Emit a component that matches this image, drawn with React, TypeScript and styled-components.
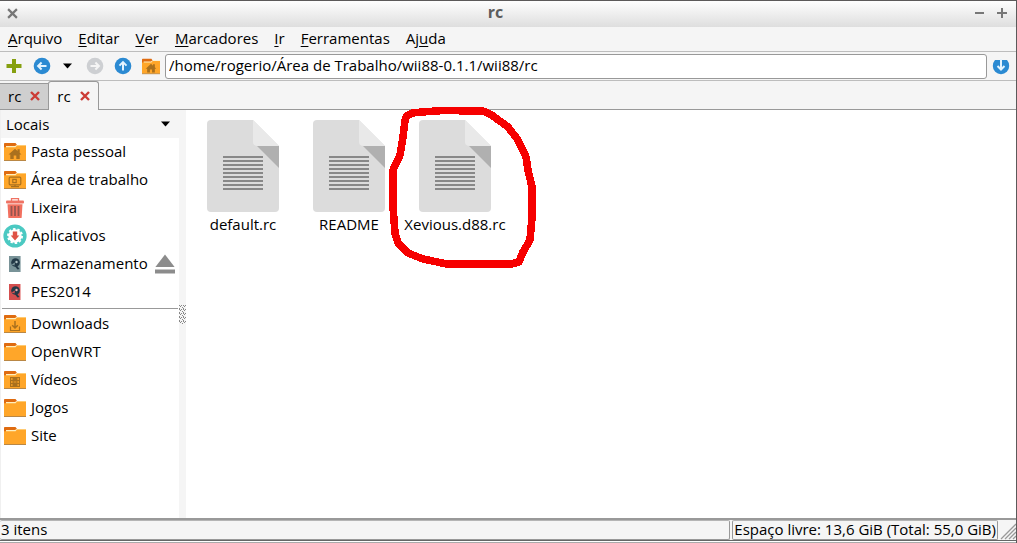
import React from "react";
import styled, { createGlobalStyle } from "styled-components";

const GlobalStyle = createGlobalStyle`
  * { box-sizing: border-box; }
  body { margin: 0; background: #fff; }
  body, button, input, select {
    font-family: "Open Sans", "Noto Sans", sans-serif;
    font-size: 15px;
    line-height: 20px;
    color: #000;
  }
  button { border: 0; padding: 0; background: none; }
  svg { display: block; flex: none; }
`;

const Window = styled.div`
  display: flex;
  flex-direction: column;
  min-height: 100vh;
  background: #f5f5f5;
  border-top: 1px solid #5c5a5a;
  border-right: 1px solid #5c5a5a;
`;

const TitleBar = styled.header`
  display: flex;
  align-items: center;
  height: 26px;
  padding: 0 8px 2px 7px;
  background: linear-gradient(#fefefe, #dedede);
`;

const Title = styled.h1`
  flex: 1;
  margin: 0;
  padding-bottom: 2px;
  text-align: center;
  font-size: 16px;
  line-height: 20px;
  color: #5c5c5c;
`;

const WindowControls = styled.div`
  display: flex;
  gap: 11px;
`;

const MenuBar = styled.nav`
  display: flex;
  align-items: flex-start;
  gap: 16px;
  height: 25px;
  padding: 1px 8px;
  border-bottom: 1px solid #bdbdbd;
`;

const MenuButton = styled.button`
  u { text-underline-offset: 2px; }
`;

const ToolBar = styled.div`
  display: flex;
  align-items: center;
  height: 29px;
  padding: 0 6px 0 5px;
  border-bottom: 1px solid #bdbdbd;
`;

const ToolButton = styled.button<{ $gap: number }>`
  margin-right: ${(p) => p.$gap}px;
`;

const PathInput = styled.input`
  flex: 1;
  min-width: 0;
  height: 25px;
  margin-right: 5px;
  padding: 0 3px 2px;
  border: 1px solid #999;
  border-radius: 3px;
  background: #fff;
  outline: none;
`;

const TabStrip = styled.div`
  display: flex;
  align-items: flex-end;
  height: 29px;
  border-bottom: 1px solid #999;
`;

const Tab = styled.div<{ $active?: boolean }>`
  display: flex;
  align-items: center;
  gap: 9px;
  height: ${(p) => (p.$active ? 29 : 26)}px;
  margin-bottom: ${(p) => (p.$active ? -1 : 0)}px;
  padding: 0 8px 1px;
  border: 1px solid #999;
  border-bottom: 0;
  border-left-width: ${(p) => (p.$active ? 1 : 0)}px;
  border-right-width: ${(p) => (p.$active ? 1 : 0)}px;
  border-radius: ${(p) => (p.$active ? "3px 3px 0 0" : "0")};
  background: ${(p) => (p.$active ? "#f5f5f5" : "#cfcfcf")};
`;

const Body = styled.main`
  display: flex;
  flex: 1;
  background: #fff;
`;

const SidePane = styled.aside`
  display: flex;
  flex-direction: column;
  width: 179px;
  border-left: 1px solid #f0f0f0;
`;

const PlacesHeader = styled.label`
  display: flex;
  align-items: center;
  height: 28px;
  padding: 0 9px 0 5px;
  background: #f5f5f5;
`;

const PlacesSelect = styled.select`
  flex: 1;
  min-width: 0;
  border: 0;
  padding: 0;
  appearance: none;
  background: none;
  outline: none;
`;

const PlaceList = styled.ul`
  margin: 0;
  padding: 0;
  list-style: none;
`;

const PlaceRow = styled.li`
  display: flex;
  align-items: center;
  justify-content: space-between;
  height: 28px;
  padding: 0 4px 0 2px;
`;

const PlaceLink = styled.a`
  display: flex;
  align-items: center;
  gap: 4px;
  color: #000;
  text-decoration: none;
  white-space: nowrap;
`;

const PlaceName = styled.span`
  padding-bottom: 2px;
`;

const IconSlot = styled.span`
  display: flex;
  justify-content: center;
  width: 24px;
`;

const Divider = styled.hr`
  margin: 2px 1px 1px;
  border: 0;
  border-top: 1px solid #999;
`;

const Splitter = styled.div`
  display: flex;
  align-items: center;
  width: 7px;
  background: #f5f5f5;
`;

const FileView = styled.section`
  display: flex;
  align-items: flex-start;
  flex: 1;
  padding: 10px 4px;
`;

const FileItem = styled.figure`
  position: relative;
  display: flex;
  flex-direction: column;
  align-items: center;
  gap: 2px;
  width: 106px;
  margin: 0;
`;

const FileName = styled.figcaption`
  white-space: nowrap;
`;

const Marking = styled.svg`
  position: absolute;
  left: -16px;
  top: -20px;
  pointer-events: none;
`;

const StatusBar = styled.footer`
  display: flex;
  gap: 2px;
  height: 23px;
  border-top: 2px solid #999;
  border-bottom: 1px solid #666;
`;

const StatusCell = styled.div<{ $grow?: boolean }>`
  flex: ${(p) => (p.$grow ? "1" : "none")};
  padding: 0 1px;
  line-height: 16px;
  border: 1px solid #999;
  border-left-width: ${(p) => (p.$grow ? 0 : 1)}px;
  border-top-color: #b5b5b5;
  border-radius: 2px;
`;

const FrameEdge = styled.div`
  height: 2px;
  background: #fff;
  border-bottom: 1px solid #aaa;
`;

const Cross = ({ color, size, weight = 2 }: { color: string; size: number; weight?: number }) => (
  <svg width={size} height={size} viewBox="0 0 10 10">
    <path d="M1 1L9 9M9 1L1 9" stroke={color} strokeWidth={weight} />
  </svg>
);

const Caret = () => (
  <svg width="9" height="6" viewBox="0 0 9 6">
    <path d="M0 0.5H9L4.5 5.5Z" fill="#000" />
  </svg>
);

const rotation = { up: 0, right: 90, left: 270 };

const ArrowDisc = ({ dir, muted }: { dir: keyof typeof rotation; muted?: boolean }) => (
  <svg width="18" height="18" viewBox="0 0 18 18">
    <circle cx="9" cy="9" r="8.3" fill={muted ? "#cdcfd2" : "#2b8ad2"} />
    <path
      d="M9 13.5V5M5.5 8.6L9 5.1L12.5 8.6"
      fill="none"
      stroke={muted ? "#f5f5f5" : "#e4f4ff"}
      strokeWidth="2"
      transform={`rotate(${rotation[dir]} 9 9)`}
    />
  </svg>
);

type Glyph = "home" | "desktop" | "download" | "video";

const FolderIcon = ({ glyph, width = 22 }: { glyph?: Glyph; width?: number }) => (
  <svg width={width} height={width === 22 ? 20 : 17} viewBox="0 0 22 20" preserveAspectRatio="none">
    <path d="M0 1.5Q0 1 .7 1H11.5L13 3V8H0Z" fill="#df6b10" />
    <path d="M2 4H11L12.5 3H22V8H2Z" fill="#ffefbd" />
    <path d="M0 5.2H11.5L13 3.6H22V18.5H0Z" fill="#ffa629" />
    <path d="M0 18.5H22" stroke="#b98745" strokeWidth="1" />
    {glyph === "home" && (
      <path d="M4.5 12.5L11 6.7L13.5 9V7.3H15.7V10.8L17.5 12.5H15.7V17H12.3V13.5H9.7V17H6.3V12.5Z" fill="#a9701e" />
    )}
    {glyph === "desktop" && (
      <g fill="none" stroke="#a9701e" strokeWidth="1.2">
        <rect x="5.2" y="7.2" width="11.6" height="7.6" rx="1" />
        <rect x="8.8" y="9.4" width="3.4" height="3.2" />
        <path d="M7 16.6H15M11 15V16.6" />
      </g>
    )}
    {glyph === "download" && (
      <g fill="none" stroke="#a9701e">
        <path d="M6.5 12.5V16.5H15.5V12.5" strokeWidth="1.2" />
        <path d="M11 7V13.5M8.2 11.2L11 14L13.8 11.2" strokeWidth="1.5" />
      </g>
    )}
    {glyph === "video" && (
      <g>
        <rect x="6" y="7" width="10" height="10" fill="#a9701e" />
        <path d="M7 8.2H8.6V9.8H7ZM7 11.2H8.6V12.8H7ZM7 14.2H8.6V15.8H7ZM13.4 8.2H15V9.8H13.4ZM13.4 11.2H15V12.8H13.4ZM13.4 14.2H15V15.8H13.4Z" fill="#ffa629" />
        <path d="M9.6 12H12.4" stroke="#ffa629" strokeWidth=".8" />
      </g>
    )}
  </svg>
);

const TrashIcon = () => (
  <svg width="20" height="22" viewBox="1 0 20 22">
    <path d="M7.5 4V1.7H14.5V4" fill="none" stroke="#ef7263" strokeWidth="1.3" />
    <rect x="2" y="3.6" width="18" height="3" rx="1" fill="#ef7263" />
    <path d="M3.5 7.3H18.5L17.6 21H4.4Z" fill="#f2705f" />
    <path d="M7.5 9V19M11 9V19M14.5 9V19" stroke="#96564f" strokeWidth="1.8" />
  </svg>
);

const AppsIcon = () => (
  <svg width="24" height="24" viewBox="0 0 24 24">
    <circle cx="12" cy="12" r="11.6" fill="#4bc9c2" />
    <circle cx="12" cy="12" r="7" fill="none" stroke="#fff" strokeWidth="2" strokeDasharray="2.4 2" />
    <circle cx="12" cy="12" r="6.7" fill="#fff" />
    <path d="M9.8 7.5H14.2V11.5H16.3L12 16.5L7.7 11.5H9.8Z" fill="#df5245" />
  </svg>
);

const DiskIcon = ({ color, edge }: { color: string; edge: string }) => (
  <svg width="22" height="18" viewBox="0 0 22 18">
    <path d="M5 1H16.5V17H5Z" fill={color} />
    <path d="M16.2 1H17V17H16.2Z" fill={edge} />
    <circle cx="11.5" cy="7.5" r="4.3" fill="#233947" />
    <circle cx="12.5" cy="7" r="1.2" fill={edge} />
    <path d="M11 8L15.5 14L13.5 14.5L9.5 9.5Z" fill="#233947" />
    <path d="M7.5 9.5L11 7.5L10.5 10.5Z" fill={color} />
  </svg>
);

const EjectIcon = () => (
  <svg width="20" height="20" viewBox="0 0 20 20">
    <path d="M10 .5L19.6 13H.4Z" fill="#8c8c8c" />
    <path d="M0 15.5H20V19.5H0Z" fill="#8c8c8c" />
  </svg>
);

const DocumentIcon = () => (
  <svg width="72" height="92" viewBox="0 0 72 92">
    <path d="M4 0H46L72 26V88Q72 92 68 92H4Q0 92 0 88V4Q0 0 4 0Z" fill="#dcdcdc" />
    <path d="M46 0L72 26H51Q46 26 46 22Z" fill="#e9e9e9" />
    <path d="M50 26H72V48Z" fill="#b0b0b0" />
    <path
      d="M16 37H56M16 41H56M16 45H56M16 49H56M16 53H56M16 57H56M16 61H56M16 65H56M16 69H56"
      stroke="#888"
      strokeWidth="2"
    />
  </svg>
);

const menus: [string, string, string][] = [
  ["", "A", "rquivo"],
  ["", "E", "ditar"],
  ["", "V", "er"],
  ["", "M", "arcadores"],
  ["", "I", "r"],
  ["", "F", "erramentas"],
  ["Aj", "u", "da"],
];

const places = [
  { name: "Pasta pessoal", icon: <FolderIcon glyph="home" /> },
  { name: "Área de trabalho", icon: <FolderIcon glyph="desktop" /> },
  { name: "Lixeira", icon: <TrashIcon /> },
  { name: "Aplicativos", icon: <AppsIcon /> },
  { name: "Armazenamento", icon: <DiskIcon color="#799398" edge="#adbfc1" />, eject: true },
  { name: "PES2014", icon: <DiskIcon color="#d44f4f" edge="#efb0b0" /> },
];

const bookmarks: { name: string; glyph?: Glyph }[] = [
  { name: "Downloads", glyph: "download" },
  { name: "OpenWRT" },
  { name: "Vídeos", glyph: "video" },
  { name: "Jogos" },
  { name: "Site" },
];

const Place = ({ name, icon, eject }: { name: string; icon: React.ReactNode; eject?: boolean }) => (
  <PlaceRow>
    <PlaceLink href="#">
      <IconSlot>{icon}</IconSlot>
      <PlaceName>{name}</PlaceName>
    </PlaceLink>
    {eject && (
      <button aria-label="Ejetar">
        <EjectIcon />
      </button>
    )}
  </PlaceRow>
);

export default function App() {
  return (
    <>
      <GlobalStyle />
      <Window>
        <TitleBar>
          <button aria-label="Fechar"><Cross color="#777" size={11} /></button>
          <Title>rc</Title>
          <WindowControls>
            <button aria-label="Minimizar">
              <svg width="12" height="12"><path d="M2 6H11" stroke="#777" strokeWidth="2" /></svg>
            </button>
            <button aria-label="Maximizar">
              <svg width="12" height="12"><path d="M1 6H11M6 1V11" stroke="#777" strokeWidth="2" /></svg>
            </button>
          </WindowControls>
        </TitleBar>

        <MenuBar>
          {menus.map(([before, key, after]) => (
            <MenuButton key={key}>
              {before}
              <u>{key}</u>
              {after}
            </MenuButton>
          ))}
        </MenuBar>

        <ToolBar>
          <ToolButton $gap={10} aria-label="Nova aba">
            <svg width="18" height="18"><path d="M7 2H11V7H16.5V11H11V16H7V11H1.5V7H7Z" fill="#86a010" /></svg>
          </ToolButton>
          <ToolButton $gap={12} aria-label="Voltar"><ArrowDisc dir="left" /></ToolButton>
          <ToolButton $gap={14} aria-label="Histórico"><Caret /></ToolButton>
          <ToolButton $gap={10} aria-label="Avançar"><ArrowDisc dir="right" muted /></ToolButton>
          <ToolButton $gap={10} aria-label="Acima"><ArrowDisc dir="up" /></ToolButton>
          <ToolButton $gap={5} aria-label="Pasta pessoal"><FolderIcon glyph="home" width={18} /></ToolButton>
          <PathInput aria-label="Caminho" defaultValue="/home/rogerio/Área de Trabalho/wii88-0.1.1/wii88/rc" />
          <button aria-label="Ir">
            <svg width="18" height="18" viewBox="0 0 18 18">
              <path d="M3 3H15Q17.2 5.5 17.2 9A8.2 8.2 0 0 1 .8 9Q.8 5.5 3 3Z" fill="#2b8ad2" />
              <path d="M9 2V12.5M5.5 9L9 12.5L12.5 9" fill="none" stroke="#e4f4ff" strokeWidth="2" />
            </svg>
          </button>
        </ToolBar>

        <TabStrip>
          <Tab>
            rc
            <button aria-label="Fechar aba"><Cross color="#cc3b35" size={10} weight={2.4} /></button>
          </Tab>
          <Tab $active>
            rc
            <button aria-label="Fechar aba"><Cross color="#cc3b35" size={10} weight={2.4} /></button>
          </Tab>
        </TabStrip>

        <Body>
          <SidePane>
            <PlacesHeader>
              <PlacesSelect aria-label="Painel lateral">
                <option>Locais</option>
              </PlacesSelect>
              <Caret />
            </PlacesHeader>
            <PlaceList>
              {places.map((p) => <Place key={p.name} {...p} />)}
            </PlaceList>
            <Divider />
            <PlaceList>
              {bookmarks.map((b) => (
                <Place key={b.name} name={b.name} icon={<FolderIcon glyph={b.glyph} />} />
              ))}
            </PlaceList>
          </SidePane>
          <Splitter>
            <svg width="7" height="19">
              <defs>
                <pattern id="dots" width="4" height="4" patternUnits="userSpaceOnUse">
                  <path d="M0 0H1V1H0ZM2 0H3V1H2ZM1 1H2V2H1ZM3 2H4V3H3ZM0 3H1V4H0Z" fill="#888" />
                </pattern>
              </defs>
              <rect width="7" height="19" fill="url(#dots)" />
            </svg>
          </Splitter>
          <FileView>
            {["default.rc", "README", "Xevious.d88.rc"].map((name, i) => (
              <FileItem key={name}>
                <DocumentIcon />
                <FileName>{name}</FileName>
                {i === 2 && (
                  <Marking width="152" height="172" viewBox="386 100 152 172" shapeRendering="crispEdges">
                    <path
                      d="M407 116L412 113L422 112L443 110.5L483 111L493 116L508 127L518 140L526 157L528 170L532 187L532 217L530 240L523 252L519 262L511 264H447L423 259L408 253L398 243L395 233L393 207V170L400 155L403 137L405 120Z"
                      fill="none"
                      stroke="#f60000"
                      strokeWidth="7.6"
                      strokeLinejoin="round"
                    />
                  </Marking>
                )}
              </FileItem>
            ))}
          </FileView>
        </Body>

        <StatusBar>
          <StatusCell $grow>3 itens</StatusCell>
          <StatusCell>Espaço livre: 13,6 GiB (Total: 55,0 GiB)</StatusCell>
          <svg width="16" height="20">
            <path d="M1 19L16 4M5 19L16 8M9 19L16 12M13 19L16 16" stroke="#999" strokeWidth="1.3" />
          </svg>
        </StatusBar>
        <FrameEdge />
      </Window>
    </>
  );
}
